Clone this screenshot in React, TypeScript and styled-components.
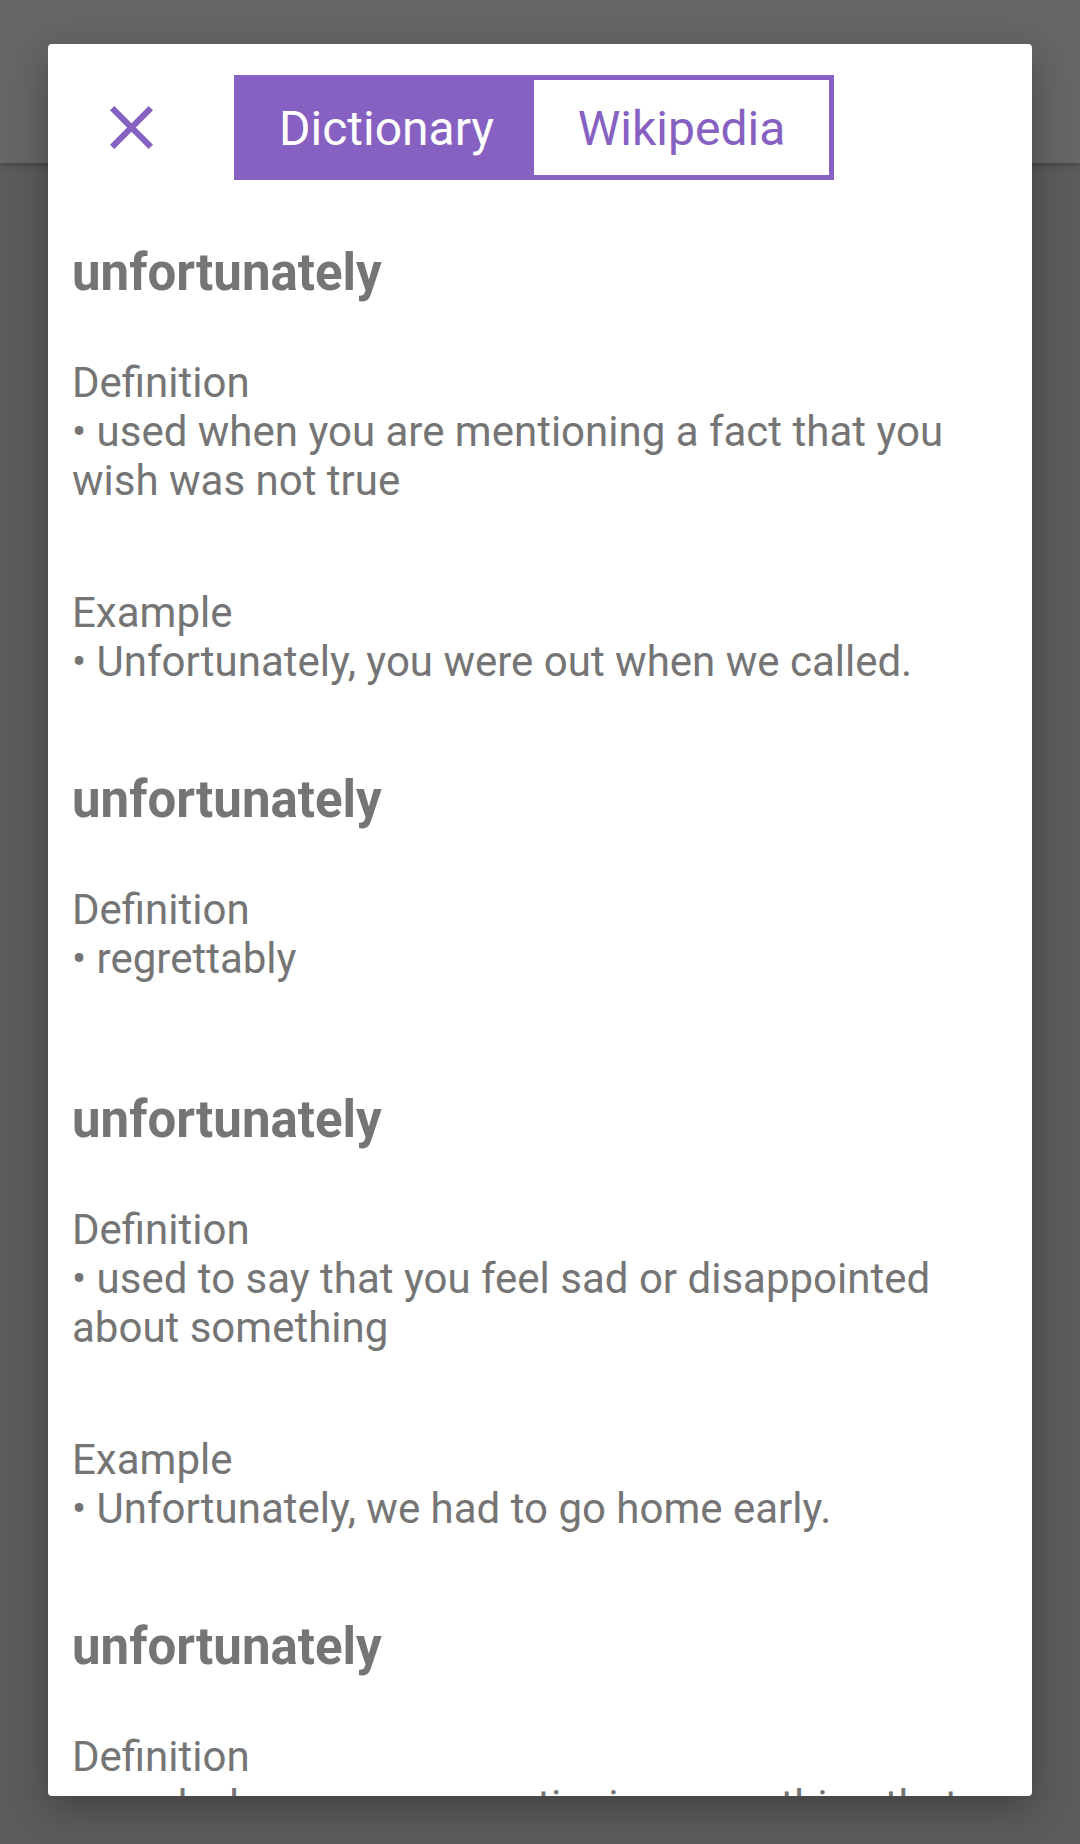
import React from "react";
import styled, { createGlobalStyle } from "styled-components";

const PURPLE = "#8661c1";
const TEXT = "#757575";

const Global = createGlobalStyle`
  html, body { margin: 0; padding: 0; }
  body {
    background: #5c5c5c;
    font-family: Roboto, "Noto Sans", "Liberation Sans", sans-serif;
  }
`;

const Page = styled.div`
  position: relative;
  width: 1080px;
  height: 1844px;
  overflow: hidden;
  background: #5c5c5c;
`;

const AppBar = styled.div`
  height: 163px;
  background: #666666;
  box-shadow: 0 2px 6px rgba(0, 0, 0, 0.28);
`;

const Dialog = styled.div`
  position: absolute;
  top: 44px;
  left: 48px;
  width: 984px;
  height: 1752px;
  background: #ffffff;
  border-radius: 4px;
  overflow: hidden;
  box-shadow: 0 12px 40px rgba(0, 0, 0, 0.3);
`;

const Header = styled.div`
  display: flex;
  align-items: center;
  gap: 81px;
  padding: 31px 0 0 62px;
`;

const CloseButton = styled.button`
  display: flex;
  width: 43px;
  height: 43px;
  padding: 0;
  border: 0;
  background: none;
  cursor: pointer;
`;

const Toggle = styled.div`
  display: flex;
  box-sizing: border-box;
  width: 600px;
  height: 105px;
  border: 5px solid ${PURPLE};
`;

const Segment = styled.div<{ $active?: boolean }>`
  flex: 1;
  display: flex;
  align-items: center;
  justify-content: center;
  padding-top: 2px;
  background: ${(p) => (p.$active ? PURPLE : "#ffffff")};
  color: ${(p) => (p.$active ? "#ffffff" : PURPLE)};
  font: 400 48px/1 Roboto, sans-serif;
`;

const Content = styled.div`
  display: flex;
  flex-direction: column;
  padding: 62px 22px 0 24px;
  color: ${TEXT};
`;

const Entry = styled.section<{ $extra?: number }>`
  display: flex;
  flex-direction: column;
  margin-bottom: ${(p) => 83 + (p.$extra ?? 0)}px;
`;

const Word = styled.h2`
  margin: 0 0 55px;
  font: 700 51px/61px Roboto, sans-serif;
  color: ${TEXT};
`;

const Block = styled.div`
  font: 400 42px/49px Roboto, sans-serif;
  & + & {
    margin-top: 83px;
  }
`;

const Label = styled.div``;
const Item = styled.div``;

type EntryData = { definition: string; example?: string };

const entries: EntryData[] = [
  {
    definition: "used when you are mentioning a fact that you wish was not true",
    example: "Unfortunately, you were out when we called.",
  },
  { definition: "regrettably" },
  {
    definition: "used to say that you feel sad or disappointed about something",
    example: "Unfortunately, we had to go home early.",
  },
  {
    definition:
      "used when you are mentioning something that you wish had not happened",
  },
];

const CloseIcon = () => (
  <svg width="43" height="43" viewBox="5 5 14 14" fill={PURPLE}>
    <path d="M19 6.41L17.59 5 12 10.59 6.41 5 5 6.41 10.59 12 5 17.59 6.41 19 12 13.41 17.59 19 19 17.59 13.41 12z" />
  </svg>
);

export default function App() {
  return (
    <>
      <Global />
      <Page>
        <AppBar />
        <Dialog>
          <Header>
            <CloseButton aria-label="Close">
              <CloseIcon />
            </CloseButton>
            <Toggle>
              <Segment $active>Dictionary</Segment>
              <Segment>Wikipedia</Segment>
            </Toggle>
          </Header>
          <Content>
            {entries.map((e, i) => (
              <Entry key={i} $extra={e.example ? 0 : 23}>
                <Word>unfortunately</Word>
                <Block>
                  <Label>Definition</Label>
                  <Item>• {e.definition}</Item>
                </Block>
                {e.example && (
                  <Block>
                    <Label>Example</Label>
                    <Item>• {e.example}</Item>
                  </Block>
                )}
              </Entry>
            ))}
          </Content>
        </Dialog>
      </Page>
    </>
  );
}
